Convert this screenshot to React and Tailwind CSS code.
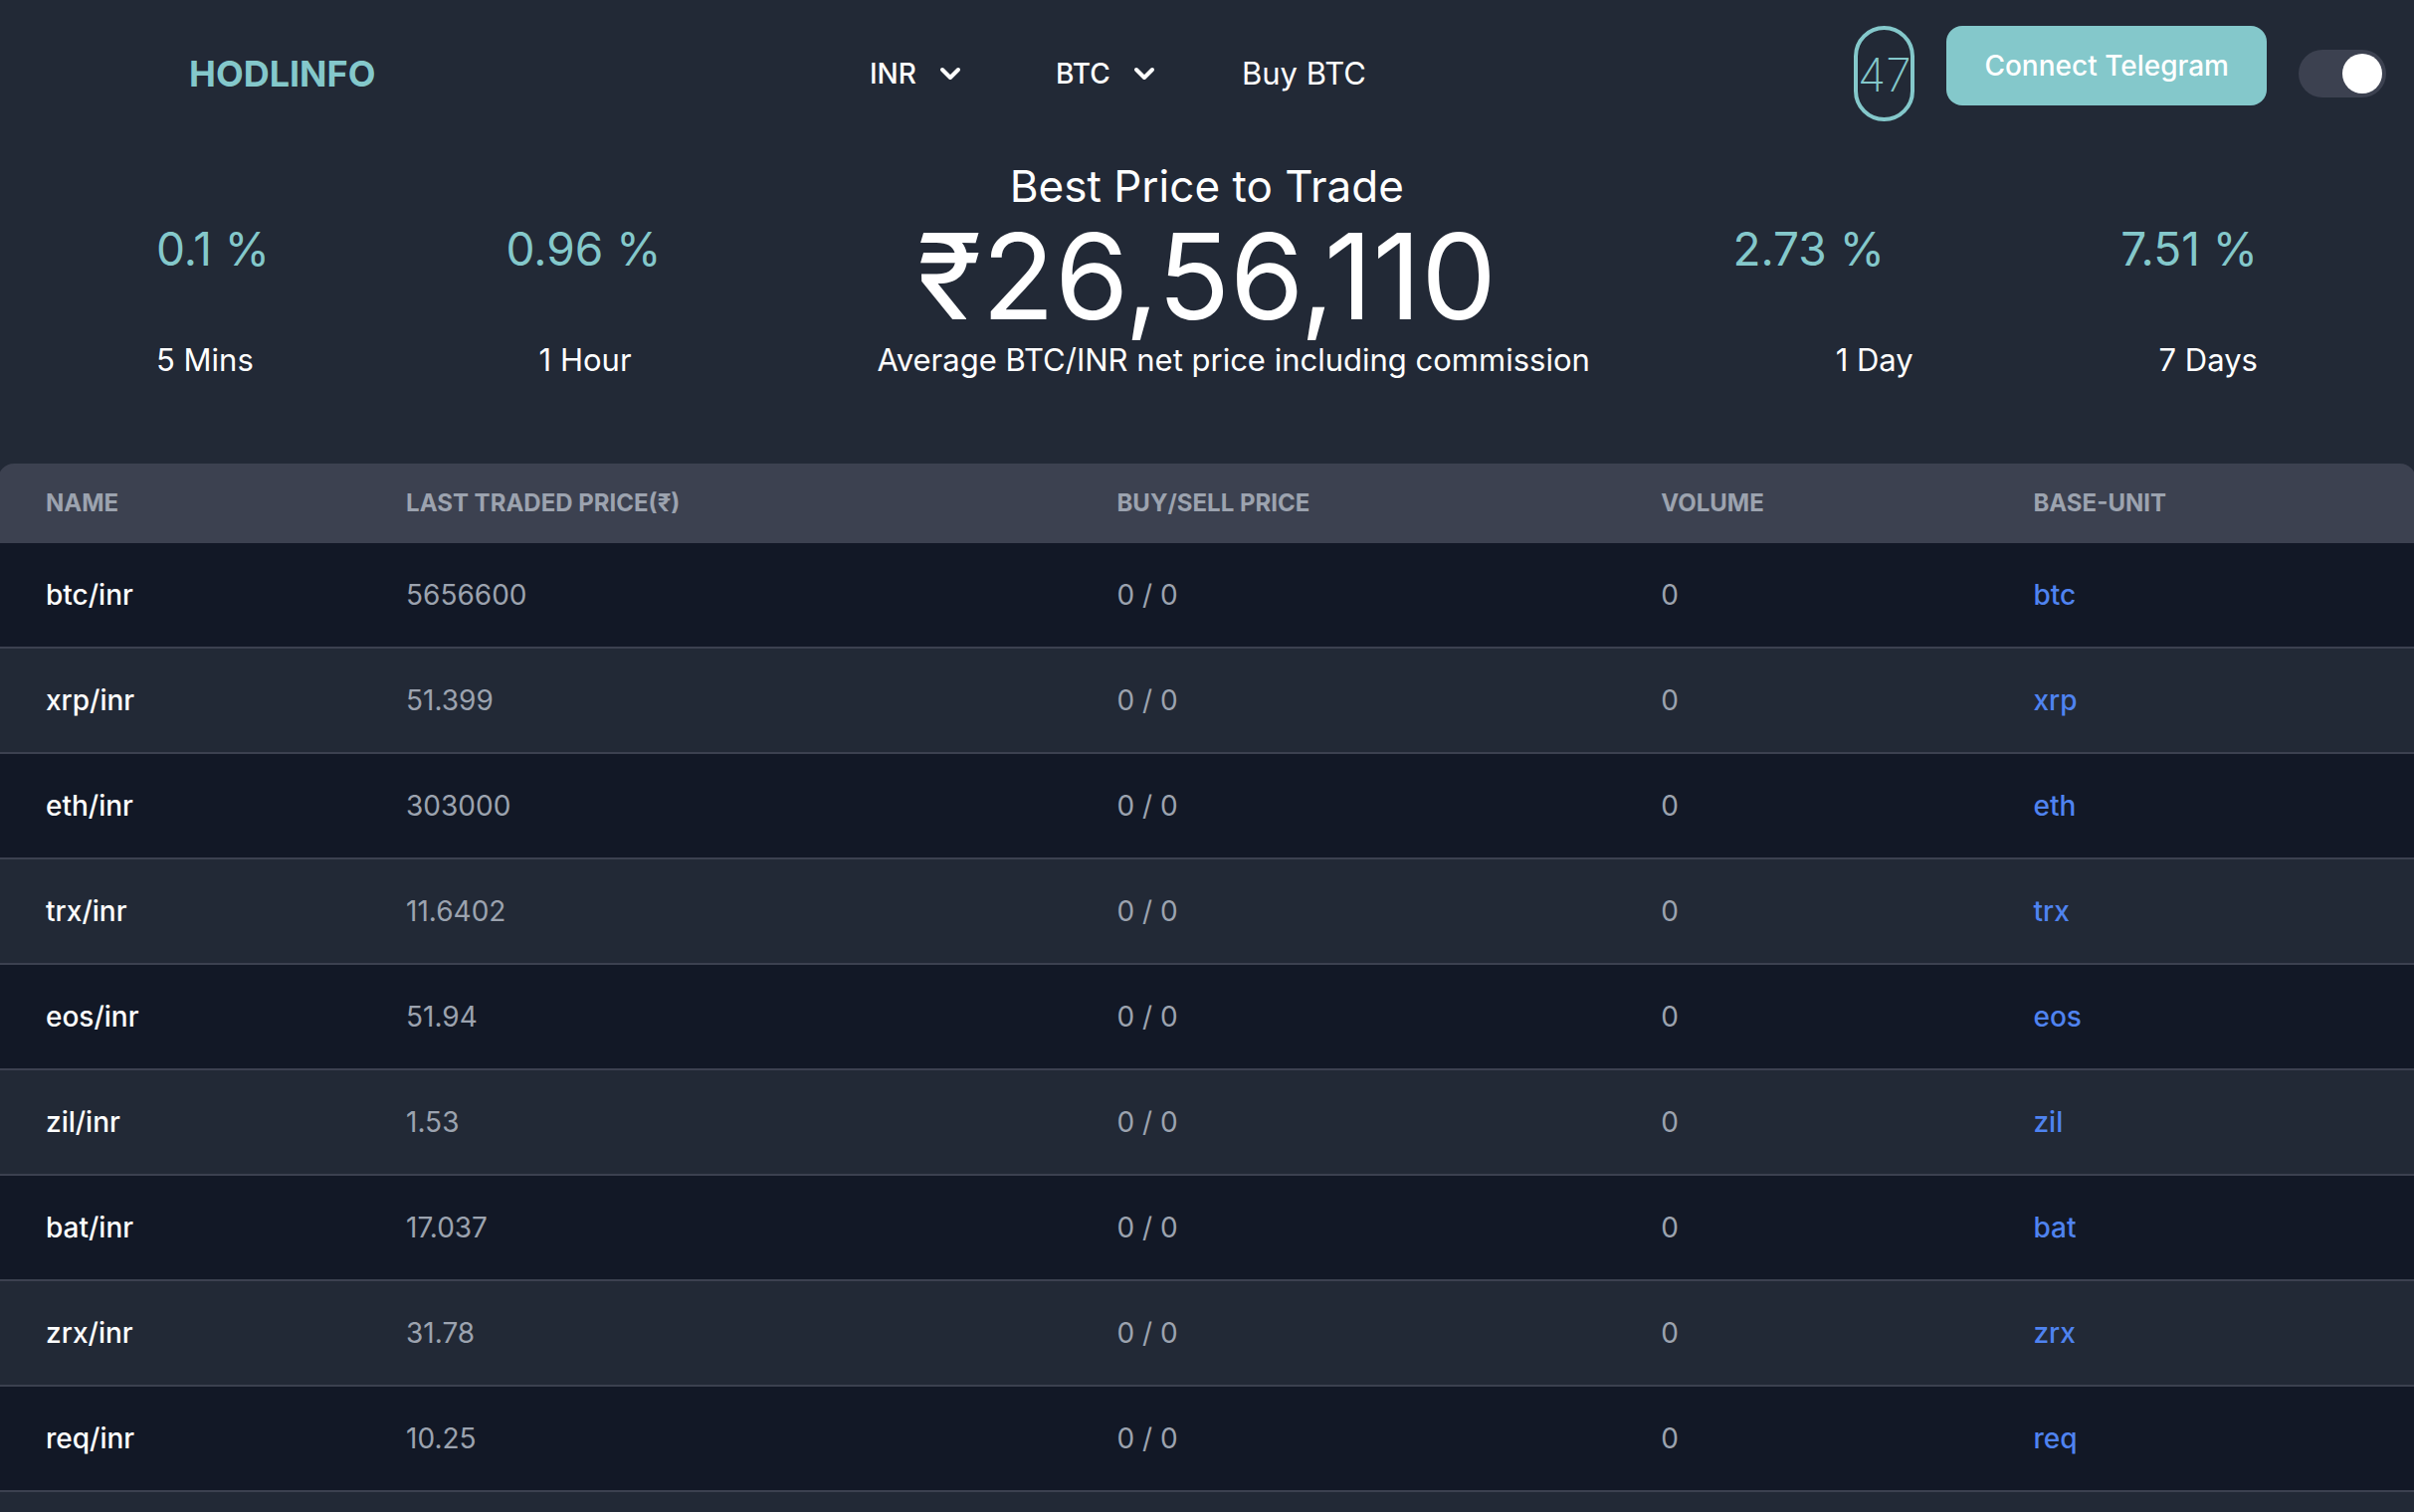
import { useState } from "react";

const rows = [
  ["btc", "5656600"],
  ["xrp", "51.399"],
  ["eth", "303000"],
  ["trx", "11.6402"],
  ["eos", "51.94"],
  ["zil", "1.53"],
  ["bat", "17.037"],
  ["zrx", "31.78"],
  ["req", "10.25"],
];

function Picker({ label, options }) {
  return (
    <div className="relative flex items-center">
      <select
        aria-label={label}
        className="appearance-none bg-transparent pr-11 text-[28px] leading-10 font-medium text-white outline-none"
      >
        {options.map((option) => (
          <option key={option}>{option}</option>
        ))}
      </select>
      <svg
        viewBox="0 0 20 10"
        className="pointer-events-none absolute right-0 h-[10px] w-[20px] overflow-visible"
        fill="none"
        stroke="white"
        strokeWidth="4"
        strokeLinecap="round"
        strokeLinejoin="round"
        aria-hidden="true"
      >
        <path d="M2 1l8 8 8-8" />
      </svg>
    </div>
  );
}

function Header() {
  const [dark, setDark] = useState(true);
  return (
    <header className="flex items-center justify-between pt-[26px] pr-7 pl-[190px]">
      <a href="#" className="text-4xl leading-10 font-bold text-[#84c8cb]">
        HODLINFO
      </a>
      <nav className="flex items-center pl-1.5">
        <Picker label="Currency" options={["INR"]} />
        <div className="ml-24">
          <Picker label="Coin" options={["BTC"]} />
        </div>
        <a href="#" className="ml-22 text-[31px] leading-10">
          Buy BTC
        </a>
      </nav>
      <div className="flex items-start gap-8">
        <div className="flex h-24 w-[61px] items-center justify-center rounded-full border-4 border-[#84c8cb] pt-0.5 text-[46px] leading-none font-extralight text-[#84c8cb]">
          47
        </div>
        <button
          type="button"
          className="h-20 rounded-2xl bg-[#84c8cb] px-[38px] text-[28px] leading-10 font-medium text-white"
        >
          Connect Telegram
        </button>
        <input
          type="checkbox"
          role="switch"
          aria-label="Dark mode"
          checked={dark}
          onChange={() => setDark(!dark)}
          className="mt-6 h-12 w-[88px] appearance-none rounded-full bg-[#3c4150] p-1 before:block before:size-10 before:rounded-full before:bg-white checked:before:ml-auto"
        />
      </div>
    </header>
  );
}

function Change({ children }) {
  return <p className="mt-15 text-[46px] leading-[72px] text-[#84c8cb]">{children}</p>;
}

function Summary() {
  return (
    <section className="mt-8 px-[157px]">
      <div className="flex items-start justify-between">
        <Change>0.1 %</Change>
        <Change>0.96 %</Change>
        <div className="pt-0.5 pl-5 text-center">
          <h1 className="text-[44px] leading-[62px]">Best Price to Trade</h1>
          <p className="text-[120px] leading-[120px]">₹26,56,110</p>
        </div>
        <Change>2.73 %</Change>
        <Change>7.51 %</Change>
      </div>
      <div className="flex justify-between text-[31px] leading-12">
        <p className="pr-10">5 Mins</p>
        <p>1 Hour</p>
        <p>Average BTC/INR net price including commission</p>
        <p>1 Day</p>
        <p>7 Days</p>
      </div>
    </section>
  );
}

function Prices() {
  return (
    <div className="-mx-0.5 mt-20 overflow-hidden rounded-t-2xl">
      <table className="w-full table-fixed text-left text-[28px] leading-10 text-[#9ca3af]">
        <thead className="bg-[#3c4150] text-2xl leading-8 uppercase">
          <tr>
            <th className="w-[14.9%] px-12 py-6">Name</th>
            <th className="w-[29.4%] px-12 py-6">Last Traded Price(₹)</th>
            <th className="w-[22.5%] px-12 py-6">Buy/Sell Price</th>
            <th className="w-[15.4%] px-12 py-6">Volume</th>
            <th className="px-12 py-6">Base-Unit</th>
          </tr>
        </thead>
        <tbody>
          {rows.map(([unit, price]) => (
            <tr key={unit} className="border-b-2 border-[#3c4150] odd:bg-[#121826] even:bg-[#222936]">
              <th scope="row" className="px-12 py-8 font-medium text-white">
                {unit}/inr
              </th>
              <td className="px-12 py-8">{price}</td>
              <td className="px-12 py-8">0 / 0</td>
              <td className="px-12 py-8">0</td>
              <td className="px-12 py-8">
                <a href="#" className="font-medium text-[#4f83f0]">
                  {unit}
                </a>
              </td>
            </tr>
          ))}
        </tbody>
      </table>
    </div>
  );
}

export default function App() {
  return (
    <div className="min-h-screen overflow-hidden bg-[#222936] font-['Inter',sans-serif] text-white">
      <Header />
      <Summary />
      <Prices />
    </div>
  );
}
